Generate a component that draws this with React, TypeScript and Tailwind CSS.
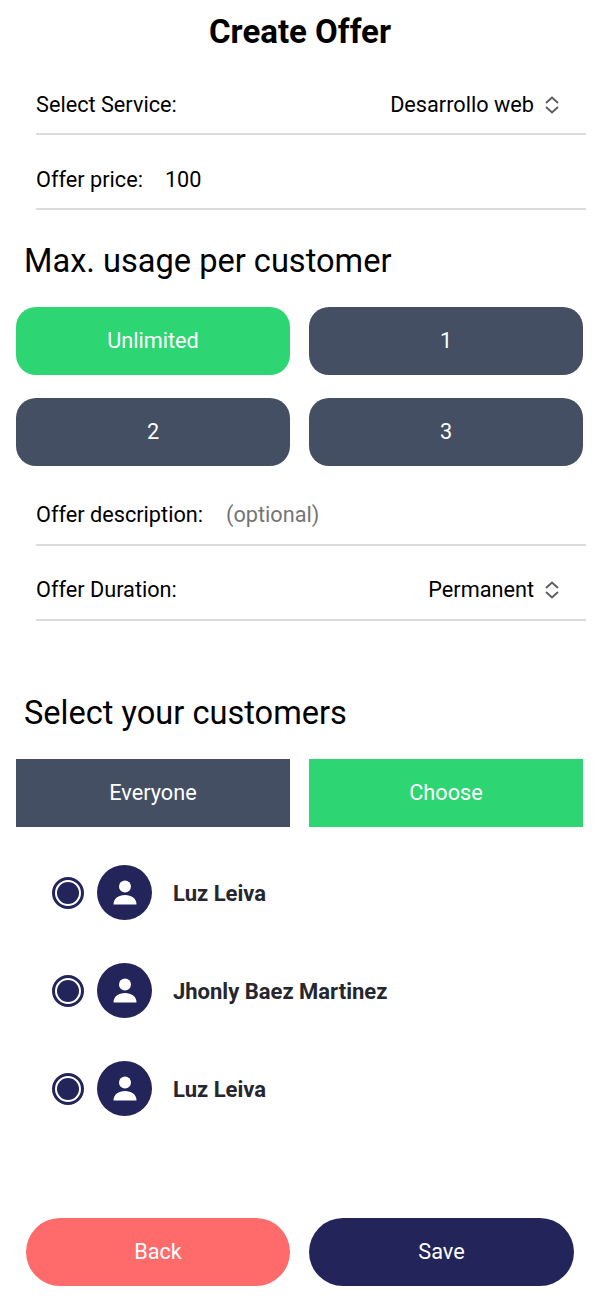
import React from 'react';

const customers = ['Luz Leiva', 'Jhonly Baez Martinez', 'Luz Leiva'];

const Chevrons: React.FC = () => (
  <svg width="16" height="20" viewBox="0 0 16 20" fill="none" stroke="#5f5f5f" strokeWidth="2" className="ml-[10px]">
    <path d="M2 8l6-5.500 6 5.500M2 12l6 5.500 6-5.500" />
  </svg>
);

const Row: React.FC<{ children: React.ReactNode; className?: string }> = ({ children, className }) => (
  <div className={`ml-[36px] mr-[14px] h-[75px] border-b-2 border-[#dcdcdc] flex items-end justify-between leading-[26px] ${className ?? ''}`}>
    {children}
  </div>
);

const Person: React.FC = () => (
  <svg width="24" height="25" viewBox="0 0 24 25" fill="#fff">
    <circle cx="12" cy="6.500" r="6" />
    <path d="M0.500 24.500c0-6 5-9.500 11.500-9.500s11.500 3.500 11.500 9.500z" />
  </svg>
);

export default function App() {
  return (
    <div className="w-[600px] h-[1303px] bg-white text-black overflow-hidden font-['Roboto',sans-serif] text-[21.7px]">
      <h1 className="h-[60px] pt-[11px] text-center text-[33px] leading-[42px] font-bold">Create Offer</h1>

      <Row className="pb-[15px]">
        <span>Select Service:</span>
        <span className="flex items-center pr-[26px]">Desarrollo web<Chevrons /></span>
      </Row>
      <Row className="pb-[15px]">
        <span>Offer price:<span className="ml-[22px]">100</span></span>
      </Row>

      <h2 className="ml-[24px] mt-[29px] text-[32.6px] leading-[44px]">Max. usage per customer</h2>

      <div className="mt-[24px] ml-[16px] w-[567px] grid grid-cols-2 gap-x-[19px] gap-y-[23px] text-white">
        <button className="h-[68px] rounded-[20px] bg-[#2ed573]">Unlimited</button>
        <button className="h-[68px] rounded-[20px] bg-[#444f63]">1</button>
        <button className="h-[68px] rounded-[20px] bg-[#444f63]">2</button>
        <button className="h-[68px] rounded-[20px] bg-[#444f63]">3</button>
      </div>

      <Row className="h-[80px] pb-[16px]">
        <span>Offer description:<span className="ml-[23px] text-[#757575]">(optional)</span></span>
      </Row>
      <Row className="pb-[16px]">
        <span>Offer Duration:</span>
        <span className="flex items-center pr-[26px]">Permanent<Chevrons /></span>
      </Row>

      <h2 className="ml-[24px] mt-[70px] text-[32.6px] leading-[44px]">Select your customers</h2>

      <div className="mt-[24px] ml-[16px] w-[567px] grid grid-cols-2 gap-x-[19px] text-white">
        <button className="h-[68px] bg-[#444f63]">Everyone</button>
        <button className="h-[68px] bg-[#2ed573]">Choose</button>
      </div>

      <div className="mt-[38px] ml-[52px] flex flex-col gap-[43px]">
        {customers.map((name, i) => (
          <div key={i} className="flex items-center h-[55px]">
            <div className="mt-[1px] w-[32px] h-[32px] rounded-full border-[3px] border-[#23255a] p-[2px]">
              <div className="w-full h-full rounded-full bg-[#23255a]" />
            </div>
            <div className="ml-[13px] w-[55px] h-[55px] rounded-full bg-[#23255a] flex items-center justify-center">
              <Person />
            </div>
            <span className="ml-[21px] pt-[1px] font-bold text-[22px] text-[#26262e]">{name}</span>
          </div>
        ))}
      </div>

      <div className="mt-[102px] ml-[26px] flex gap-[19px] text-white">
        <button className="w-[264px] h-[68px] rounded-[34px] bg-[#ff6b6b]">Back</button>
        <button className="w-[265px] h-[68px] rounded-[34px] bg-[#23255a]">Save</button>
      </div>
    </div>
  );
}
